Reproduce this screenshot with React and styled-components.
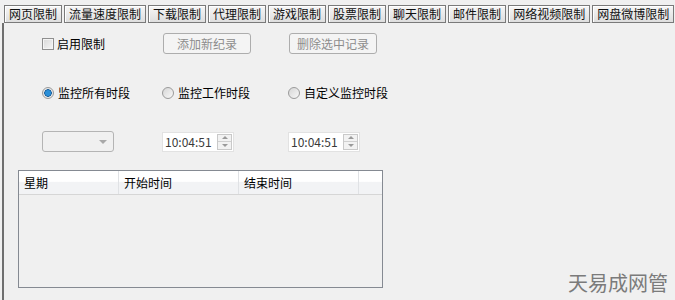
import React from 'react';
import styled, { createGlobalStyle } from 'styled-components';

const GlobalStyle = createGlobalStyle`
  html, body {
    margin: 0;
    padding: 0;
    background: #f0f0f0;
    font-family: "Noto Sans CJK SC", "DejaVu Sans", sans-serif;
    font-size: 12px;
    color: #000;
  }
  *, *::before, *::after {
    box-sizing: border-box;
  }
`;

const Window = styled.div`
  position: relative;
  width: 675px;
  height: 300px;
  overflow: hidden;
  background: #f0f0f0;
  display: flex;
  flex-direction: column;
`;

const TabBar = styled.div`
  display: flex;
  gap: 2px;
  padding: 5px 0 0 4px;
  height: 23px;
`;

const Tab = styled.div`
  height: 18px;
  padding: 0 4px;
  display: flex;
  align-items: center;
  justify-content: center;
  border: 1px solid #7a7a7a;
  box-shadow: inset 1px 1px 0 #ffffff;
  background: linear-gradient(#f6f6f6, #dedede);
  line-height: 16px;
  white-space: nowrap;
  color: #111;
`;

const Panel = styled.div`
  flex: 1;
  margin-left: 2px;
  border-left: 2px solid #6f6f6f;
  padding: 10px 0 0 38px;
`;

const Controls = styled.div`
  display: grid;
  grid-template-columns: 120px 126px 1fr;
  grid-auto-rows: 21px;
  row-gap: 28px;
  align-items: center;
`;

const Check = styled.label`
  display: flex;
  align-items: center;
  gap: 3px;
`;

const Box = styled.span`
  width: 12px;
  height: 12px;
  border: 1px solid #8f8f8f;
  background: linear-gradient(135deg, #d8d8d8, #f6f6f6);
  box-shadow: inset 0 0 0 1px #f4f4f4;
`;

const Button = styled.div`
  width: 88px;
  height: 21px;
  display: flex;
  align-items: center;
  justify-content: center;
  border: 1px solid #adadad;
  border-radius: 3px;
  background: #f4f4f4;
  color: #8d8d8d;
  margin-left: ${({ shift }) => shift || 0}px;
`;

const Radio = styled.label`
  display: flex;
  align-items: center;
  gap: 4px;
`;

const Dot = styled.span`
  width: 12px;
  height: 12px;
  border-radius: 50%;
  border: 1px solid #9a9a9a;
  background: ${({ on }) =>
    on ? 'radial-gradient(circle, #2a8fd8 0 2.5px, #175c98 3.5px, #e8e8e8 4px)' : 'linear-gradient(135deg, #d6d6d6, #f8f8f8)'};
`;

const Combo = styled.div`
  width: 72px;
  height: 21px;
  border: 1px solid #b4b4b4;
  border-radius: 3px;
  background: #f0f0f0;
  display: flex;
  align-items: center;
  justify-content: flex-end;
  padding-right: 6px;

  &::after {
    content: '';
    border-left: 4px solid transparent;
    border-right: 4px solid transparent;
    border-top: 4px solid #a8a8a8;
  }
`;

const Spin = styled.div`
  width: 72px;
  height: 20px;
  border: 1px solid #e2e2e2;
  background: #fff;
  display: flex;
  align-items: center;
  justify-content: space-between;
  padding: 0 1px 0 2px;
  color: #3a3a3a;
  margin-left: ${({ shift }) => shift || 0}px;
`;

const Arrows = styled.div`
  display: flex;
  flex-direction: column;
  width: 15px;
  height: 16px;
  border: 1px solid #c9c9c9;
  background: #f2f2f2;
`;

const Arrow = styled.span`
  flex: 1;
  display: flex;
  align-items: center;
  justify-content: center;
  border-top: ${({ down }) => (down ? '1px solid #d0d0d0' : 'none')};

  &::after {
    content: '';
    border-left: 3px solid transparent;
    border-right: 3px solid transparent;
    ${({ down }) => (down ? 'border-top: 3px solid #9a9a9a;' : 'border-bottom: 3px solid #9a9a9a;')}
  }
`;

const Table = styled.div`
  margin: 18px 0 0 -24px;
  width: 365px;
  height: 118px;
  border: 1px solid #858a92;
  background: #f0f0f0;
`;

const Header = styled.div`
  display: grid;
  grid-template-columns: 100px 120px 120px 1fr;
  height: 24px;
  border-bottom: 1px solid #d6d6d6;
  background: linear-gradient(#ffffff 0%, #ffffff 45%, #f2f3f5 50%, #f2f3f5 100%);
`;

const HeadCell = styled.div`
  display: flex;
  align-items: center;
  padding-left: 5px;
  border-right: 1px solid #e0e2e5;

  &:last-child {
    border-right: none;
  }
`;

const Watermark = styled.div`
  position: absolute;
  right: 7px;
  bottom: 3px;
  font-size: 20px;
  color: #7b7b7b;
`;

const tabs = ['网页限制', '流量速度限制', '下载限制', '代理限制', '游戏限制', '股票限制', '聊天限制', '邮件限制', '网络视频限制', '网盘微博限制'];

const TimeSpin = ({ shift }) => (
  <Spin shift={shift}>
    <span>10:04:51</span>
    <Arrows>
      <Arrow />
      <Arrow down />
    </Arrows>
  </Spin>
);

export default function App() {
  return (
    <>
      <GlobalStyle />
      <Window>
        <TabBar>
          {tabs.map((t) => (
            <Tab key={t}>{t}</Tab>
          ))}
        </TabBar>
        <Panel>
          <Controls>
            <Check>
              <Box />
              启用限制
            </Check>
            <Button shift={1}>添加新纪录</Button>
            <Button shift={1}>删除选中记录</Button>

            <Radio>
              <Dot on />
              监控所有时段
            </Radio>
            <Radio>
              <Dot />
              监控工作时段
            </Radio>
            <Radio>
              <Dot />
              自定义监控时段
            </Radio>

            <Combo />
            <TimeSpin />
            <TimeSpin />
          </Controls>
          <Table>
            <Header>
              <HeadCell>星期</HeadCell>
              <HeadCell>开始时间</HeadCell>
              <HeadCell>结束时间</HeadCell>
              <HeadCell />
            </Header>
          </Table>
        </Panel>
        <Watermark>天易成网管</Watermark>
      </Window>
    </>
  );
}
